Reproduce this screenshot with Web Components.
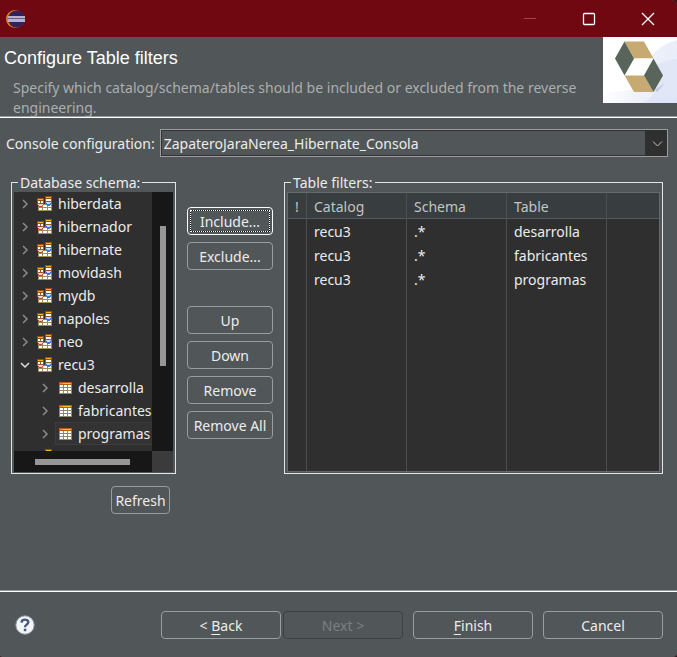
<!DOCTYPE html>
<html lang="en">
<head>
<meta charset="utf-8">
<meta name="viewport" content="width=device-width, initial-scale=1">
<title>Configure Table filters</title>
<style>
  body {
    margin: 0;
    background: #3c141a;
    color: #ececec;
    font: 14px/20px "Noto Sans", "Open Sans", sans-serif;
    --face: #515658;
    --edge: #9a9c9d;
    --dark: #2f2f2f;
    --frame: #e4e4e4;
  }
</style>
</head>
<body>
<wizard-window>
  <title-bar slot="bar"></title-bar>
  <wizard-header slot="head">
    <span slot="title">Configure Table filters</span>
    <span slot="text">Specify which catalog/schema/tables should be included or excluded from the reverse engineering.</span>
  </wizard-header>
  <console-picker value="ZapateroJaraNerea_Hibernate_Consola"></console-picker>
  <filter-editor></filter-editor>
  <wizard-footer slot="foot"></wizard-footer>
</wizard-window>

<script>
function define(name, html, setup) {
  const template = document.createElement('template');
  template.innerHTML = html;
  customElements.define(name, class extends HTMLElement {
    constructor() {
      super();
      this.attachShadow({ mode: 'open' }).append(template.content.cloneNode(true));
    }
    connectedCallback() {
      if (setup && !this.ready) { this.ready = true; setup(this, this.shadowRoot); }
    }
  });
}

define('wizard-window', `
  <style>
    :host { display: flex; flex-direction: column; min-height: 100vh; background: var(--face); border-radius: 0 6px 4px 2px; overflow: hidden; }
    main { flex: 1; padding: 11px 9px 15px 6px; display: flex; flex-direction: column; gap: 16px; }
  </style>
  <slot name="bar"></slot>
  <slot name="head"></slot>
  <main><slot></slot></main>
  <slot name="foot"></slot>`);

define('title-bar', `
  <style>
    :host { display: flex; align-items: center; height: 37px; background: #6f0810; }
    .logo { margin-left: 6px; margin-right: auto; }
    button { width: 59px; height: 36px; padding: 0; border: 0; background: none; color: #fff; display: grid; place-items: center; }
    button:disabled { color: #974850; }
  </style>
  <svg class="logo" width="20" height="20" viewBox="0 0 20 20" aria-hidden="true">
    <circle cx="9" cy="10" r="9" fill="#e5862b"/>
    <circle cx="10.500" cy="10" r="8.800" fill="#6b2434"/>
    <circle cx="11" cy="10" r="8" fill="#2c2360"/>
    <rect x="2" y="7" width="17" height="6" fill="#b9afd0"/>
    <path d="M2 9.500h17" stroke="#6d5a88" stroke-width="1"/>
  </svg>
  <button type="button" aria-label="Minimize" disabled><svg width="14" height="14" viewBox="0 0 14 14"><path d="M1 6.500h12" stroke="currentColor"/></svg></button>
  <button type="button" aria-label="Maximize"><svg width="14" height="14" viewBox="0 0 14 14"><rect x="1.500" y="1.500" width="11" height="11" rx="1" fill="none" stroke="currentColor" stroke-width="1.300"/></svg></button>
  <button type="button" aria-label="Close"><svg width="14" height="14" viewBox="0 0 14 14"><path d="M1 1l12 12M13 1L1 13" stroke="currentColor" stroke-width="1.300"/></svg></button>`);

define('wizard-header', `
  <style>
    :host { display: flex; justify-content: space-between; min-height: 80px; border-bottom: 1px solid #fff; box-shadow: inset 0 -1px #96999a; }
    .copy { padding: 11px 16px 0 4px; flex: 1; }
    h1 { margin: 0 0 10px; font: 18px/20px "Liberation Sans", Arial, sans-serif; color: #fff; }
    p { margin: 0 0 -2px 9px; color: #acaeaf; }
    svg { flex: none; }
  </style>
  <div class="copy"><h1><slot name="title"></slot></h1><p><slot name="text"></slot></p></div>
  <svg width="74" height="66" viewBox="0 0 74 66" aria-hidden="true">
    <defs>
      <linearGradient id="a" x1="0" x2="1"><stop offset="0" stop-color="#fff"/><stop offset="1" stop-color="#dce2f5"/></linearGradient>
      <linearGradient id="b" x1="0" x2="1" y1="0" y2=".3"><stop offset="0" stop-color="#f3f5fc"/><stop offset="1" stop-color="#e9edf9"/></linearGradient>
    </defs>
    <rect width="74" height="66" fill="#fff"/>
    <path d="M0 56L74 48V66H0z" fill="url(#a)"/>
    <path d="M46 22Q58 6 74 3V60H30Q44 50 46 22z" fill="url(#b)"/>
    <path d="M50 30Q60 23 74 22V66H40Q60 56 50 30z" fill="#dfe5f6" opacity=".8"/>
    <path d="M52 53l10-7-8 9z" fill="#c4c8d4"/>
    <path d="M21.500 4.500h19.500l9.500 17h-19.500z" fill="#c7aa72"/>
    <path d="M31 21.500h19.500l-9.500 17H21.500z" fill="#fff"/>
    <path d="M21.500 38.500H41l9.500 16.500H31z" fill="#c7aa72"/>
    <path d="M21.500 4.500l9.500 17-9.500 17-9.500-17z" fill="#59645b"/>
    <path d="M50.500 21.500l9.500 17-9.500 16.500-9.500-16.500z" fill="#59645b"/>
  </svg>`);

define('console-picker', `
  <style>
    :host { display: flex; align-items: center; gap: 5px; }
    label { padding-top: 2px; }
    .box { position: relative; flex: 1; display: flex; }
    select { appearance: none; flex: 1; min-width: 0; height: 28px; margin: 0; padding: 2px 28px 0 3px; border: 1px solid var(--edge); outline: 1px solid #333; outline-offset: -2px; border-radius: 0; background: var(--face); color: inherit; font: inherit; }
    svg { position: absolute; top: 1px; right: 1px; bottom: 1px; height: 26px; background: #2f2f2f; pointer-events: none; }
  </style>
  <label for="console">Console configuration:</label>
  <div class="box">
    <select id="console"><option></option></select>
    <svg width="22" height="26" viewBox="0 0 22 26" fill="none" stroke="#c2c2c2" aria-hidden="true"><path d="M8 11.500l4.500 4.500 4.500-4.500"/></svg>
  </div>`,
  (el, root) => { root.querySelector('option').textContent = el.getAttribute('value'); });

define('push-button', `
  <style>
    :host { display: block; }
    button { display: block; box-sizing: border-box; width: 100%; height: 28px; padding: 2px 0 0; border: 1px solid var(--edge); border-radius: 4px; background: none; color: inherit; font: inherit; white-space: nowrap; }
    button:disabled { color: #7c8081; border-color: #3c4041; }
    :host([default]) button { border-color: #fff; outline: 1px dotted #fff; outline-offset: -4px; box-shadow: inset 0 0 0 2px var(--face), inset 0 0 0 3px #111; }
    ::slotted(u) { text-underline-offset: 3px; }
  </style>
  <button type="button"><slot></slot></button>`,
  (el, root) => { root.querySelector('button').disabled = el.hasAttribute('disabled'); });

define('group-box', `
  <style>
    :host { display: flex; flex-direction: column; min-width: 0; }
    fieldset { flex: 1; min-width: 0; margin: 0; padding: 0 2px 1px; border: 1px solid var(--frame); display: flex; flex-direction: column; }
    legend { margin-left: 4px; padding: 0 2px; line-height: 19px; white-space: nowrap; }
    ::slotted(*) { flex: 1; }
  </style>
  <fieldset><legend></legend><slot></slot></fieldset>`,
  (el, root) => { root.querySelector('legend').textContent = el.getAttribute('label'); });

const grid = `
  <svg width="16" height="16" viewBox="0 0 16 16" shape-rendering="crispEdges" aria-hidden="true">
    <path fill="#8d8a62" d="M1 2h13v12H1z"/><path fill="#b85f14" d="M1 2h13v3H1z"/><path fill="#ffc21d" d="M5 3h8v1H5z"/><path fill="#f08a1c" d="M2 3h3v1H2z"/>
    <path fill="#fff" d="M2 5h3v2H2zM6 5h3v2H6zM10 5h3v2h-3zM2 8h3v2H2zM6 8h3v2H6zM10 8h3v2h-3zM2 11h3v2H2zM6 11h3v2H6zM10 11h3v2h-3z"/>
  </svg>`;
const schema = `
  <svg width="16" height="16" viewBox="0 0 16 16" shape-rendering="crispEdges" aria-hidden="true">
    <path fill="#a08d4e" d="M1 8h14v7H1z"/><path fill="#fff" d="M2 9h3v2H2zM6 9h4v2H6zM11 9h3v2h-3zM2 12h3v2H2zM6 12h4v2H6zM11 12h3v2h-3z"/>
    <path fill="#9e4c0c" d="M8 0h7v3H8zM0 2h7v3H0z"/><path fill="#ffb41c" d="M9 1h5v1H9zM1 3h5v1H1z"/>
    <path fill="#8a5a30" d="M8 3h7v3H8zM0 5h7v3H0z"/><path fill="#fff" d="M9 3h5v2H9zM1 5h2v2H1zM4 5h2v2H4z"/>
    <path fill="#3f74e8" d="M8 6h7v2h-1v1h-1v1h-3V9H9V8H8z"/><path fill="#c4d8ff" d="M9 6h5v1h-1v1h-3V7H9z"/>
    <path fill="#d23c3c" d="M0 8h7v1H6v1H5v1H2v-1H1V9H0z"/><path fill="#ffd4d0" d="M1 8h5v1H5v1H2V9H1z"/>
  </svg>`;

define('tree-node', `
  <style>
    :host { display: flex; align-items: center; height: 23px; padding-left: 7px; white-space: nowrap; }
    :host([level="2"]) { padding-left: 27px; }
    .arrow { flex: none; margin-right: 6px; color: #8a8a8a; }
    :host([open]) .arrow { color: #e0e0e0; transform: rotate(90deg); }
    .item { flex: 1; display: flex; align-items: center; gap: 5px; height: 21px; padding-left: 1px; border: 1px solid transparent; border-right: 0; }
    .item svg { flex: none; }
    :host([level="2"]) .item { gap: 4px; padding-left: 2px; }
    :host([selected]) .item { border-color: #3c3c3c; background: #333; }
  </style>
  <svg class="arrow" width="8" height="10" viewBox="0 0 8 10" fill="none" stroke="currentColor" stroke-width="1.500" aria-hidden="true"><path d="M2 1l4 4-4 4"/></svg>
  <div class="item"><span class="icon" style="display:contents"></span><slot></slot></div>`,
  (el, root) => {
    el.setAttribute('role', 'treeitem');
    root.querySelector('.icon').innerHTML = el.getAttribute('level') === '2' ? grid : schema;
  });

define('schema-tree', `
  <style>
    :host { display: grid; grid-template: 259px 21px / minmax(0, 1fr) 21px; background: #171717; }
    .view { overflow: hidden; background: var(--dark); }
    .v { padding-top: 34px; }
    .v i { display: block; width: 6px; height: 140px; margin: 0 auto; background: #969696; }
    .h { padding: 8px 22px 0 21px; }
    .h i { display: block; height: 6px; background: #969696; }
    .corner { background: #3b3b3b; }
  </style>
  <div class="view" role="tree" aria-label="Database schema">
    <tree-node>hiberdata</tree-node><tree-node>hibernador</tree-node><tree-node>hibernate</tree-node>
    <tree-node>movidash</tree-node><tree-node>mydb</tree-node><tree-node>napoles</tree-node>
    <tree-node>neo</tree-node><tree-node open>recu3</tree-node>
    <tree-node level="2">desarrolla</tree-node><tree-node level="2">fabricantes</tree-node><tree-node level="2" selected>programas</tree-node>
    <tree-node></tree-node>
  </div>
  <div class="v"><i></i></div><div class="h"><i></i></div><div class="corner"></div>`);

define('filter-table', `
  <style>
    :host { display: flex; border: 1px solid #66696b; background: var(--dark); }
    table { flex: 1; width: 100%; table-layout: fixed; border-spacing: 0; }
    th, td { padding: 2px 0 0 7px; border-right: 1px solid #4b4f51; text-align: left; font-weight: 400; }
    th:last-child, td:last-child { border-right: 0; }
    th { height: 23px; background: #383d3f; border-bottom: 1px solid #54585a; color: #c2c4c5; }
    td { height: 22px; }
    .bang { width: 11px; } .name { width: 92px; }
    .rest td { height: auto; }
  </style>
  <table>
    <thead><tr><th class="bang">!</th><th class="name">Catalog</th><th class="name">Schema</th><th class="name">Table</th><th></th></tr></thead>
    <tbody>
      <tr><td></td><td>recu3</td><td>.*</td><td>desarrolla</td><td></td></tr>
      <tr><td></td><td>recu3</td><td>.*</td><td>fabricantes</td><td></td></tr>
      <tr><td></td><td>recu3</td><td>.*</td><td>programas</td><td></td></tr>
      <tr class="rest"><td></td><td></td><td></td><td></td><td></td></tr>
    </tbody>
  </table>`);

define('filter-editor', `
  <style>
    :host { display: grid; grid-template-columns: 165px 86px minmax(0, 1fr); column-gap: 11px; row-gap: 12px; padding: 0 5px; }
    .actions { display: flex; flex-direction: column; gap: 7px; padding-top: 34px; }
    .gap { margin-top: 15px; }
    .refresh { justify-self: end; width: 59px; margin-right: 6px; }
    .actions .gap { margin-top: 29px; }
  </style>
  <group-box label="Database schema:"><schema-tree></schema-tree></group-box>
  <div class="actions">
    <push-button default>Include...</push-button><push-button>Exclude...</push-button>
    <push-button class="gap">Up</push-button><push-button>Down</push-button>
    <push-button>Remove</push-button><push-button>Remove All</push-button>
  </div>
  <group-box label="Table filters:"><filter-table></filter-table></group-box>
  <push-button class="refresh">Refresh</push-button>`);

define('wizard-footer', `
  <style>
    :host { display: flex; align-items: center; padding: 19px 14px 18px; gap: 10px; border-top: 1px solid #fff; box-shadow: 0 -1px #96999a; }
    .help { width: 22px; height: 22px; padding: 0; margin-right: auto; border: 0; background: none; display: grid; place-items: center; }
    .pair { display: flex; gap: 2px; }
    push-button { width: 120px; }
    u { text-underline-offset: 3px; }
  </style>
  <button class="help" type="button" aria-label="Help">
    <svg width="20" height="20" viewBox="0 0 20 20"><circle cx="10" cy="10" r="9.200" fill="#f4f5f7" stroke="#8a97ac"/><path d="M6.500 7.600C6.700 3.600 13.400 3.700 13.300 7.300C13.200 9.600 10 9.700 10 12.200" fill="none" stroke="#46597f" stroke-width="2.400"/><rect x="8.800" y="13.700" width="2.500" height="2.500" fill="#46597f"/></svg>
  </button>
  <div class="pair"><push-button>&lt; <u>B</u>ack</push-button><push-button disabled>Next &gt;</push-button></div>
  <push-button><u>F</u>inish</push-button>
  <push-button>Cancel</push-button>`);
</script>
</body>
</html>
